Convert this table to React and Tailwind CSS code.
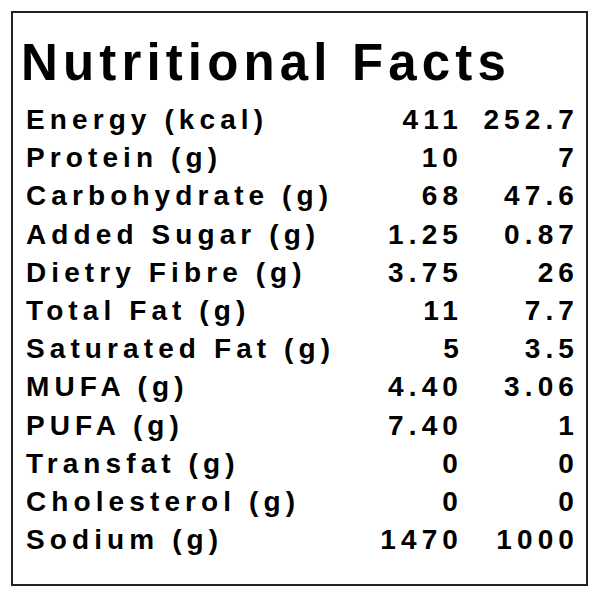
const rows = [
    ["Energy (kcal)", "411", "252.7"],
    ["Protein (g)", "10", "7"],
    ["Carbohydrate (g)", "68", "47.6"],
    ["Added Sugar (g)", "1.25", "0.87"],
    ["Dietry Fibre (g)", "3.75", "26"],
    ["Total Fat (g)", "11", "7.7"],
    ["Saturated Fat (g)", "5", "3.5"],
    ["MUFA (g)", "4.40", "3.06"],
    ["PUFA (g)", "7.40", "1"],
    ["Transfat (g)", "0", "0"],
    ["Cholesterol (g)", "0", "0"],
    ["Sodium (g)", "1470", "1000"],
];

const App = () => {
    return (
        <div className="w-[600px] h-[600px] bg-white pt-[11px] pl-[11px] font-['Liberation_Sans',Arial,sans-serif] text-black">
            <div className="w-[577px] h-[575px] border-2 border-[#222] pt-[20px] pr-[7px]">
                {/* Title */}
                <h1 className="pl-[8px] text-[51px] leading-[60px] font-bold tracking-[5.15px] whitespace-nowrap">
                    Nutritional Facts
                </h1>

                {/* Rows */}
                <div className="mt-[8px] pl-[13px]">
                    {rows.map(([label, a, b]) => (
                        <div key={label} className="flex text-[28px] leading-[38.2px] font-bold tracking-[5.1px] whitespace-nowrap">
                            <span className="flex-1">{label}</span>
                            <span className="w-[130px] text-right">{a}</span>
                            <span className="w-[116px] text-right">{b}</span>
                        </div>
                    ))}
                </div>
            </div>
        </div>
    );
};

export default App;
